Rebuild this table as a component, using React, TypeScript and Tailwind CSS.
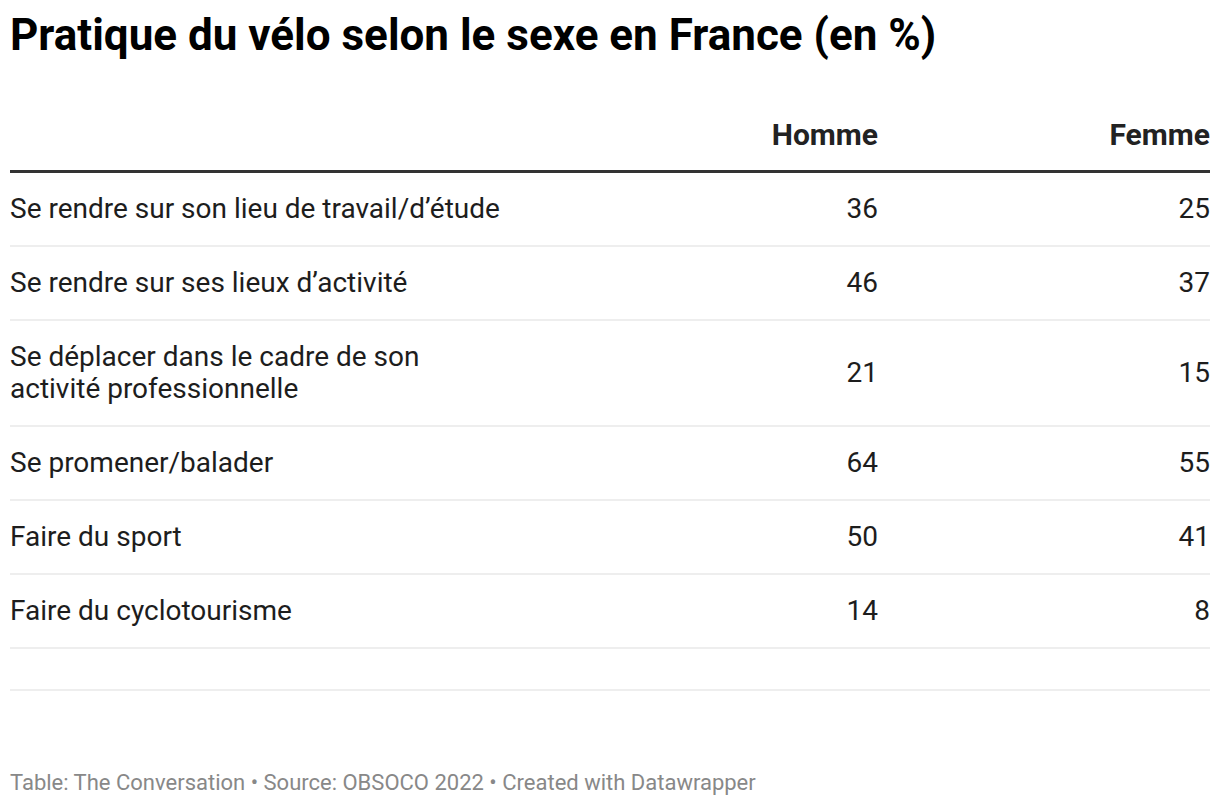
import React from "react";

const rows: { label: React.ReactNode; h: string; f: string }[] = [
  { label: "Se rendre sur son lieu de travail/d’étude", h: "36", f: "25" },
  { label: "Se rendre sur ses lieux d’activité", h: "46", f: "37" },
  {
    label: (
      <>
        Se déplacer dans le cadre de son
        <br />
        activité professionnelle
      </>
    ),
    h: "21",
    f: "15",
  },
  { label: "Se promener/balader", h: "64", f: "55" },
  { label: "Faire du sport", h: "50", f: "41" },
  { label: "Faire du cyclotourisme", h: "14", f: "8" },
];

export default function App() {
  return (
    <div
      className="w-[1220px] h-[806px] bg-white px-[10px] text-[#1d1d1d] overflow-hidden"
      style={{ fontFamily: "Roboto, 'Liberation Sans', sans-serif" }}
    >
      <h1 className="pt-[10px] text-[44px] leading-[50px] font-bold text-black whitespace-nowrap">
        Pratique du vélo selon le sexe en France (en %)
      </h1>
      <div className="mt-[57px] flex items-end border-b-[3px] border-[#333333] pb-[17px] text-[30px] leading-[36px] font-bold text-[#222222]">
        <div className="flex-1" />
        <div className="w-[332px] text-right">Homme</div>
        <div className="w-[332px] text-right">Femme</div>
      </div>
      {rows.map((r, i) => (
        <div
          key={i}
          className="flex items-center border-b-2 border-[#eeeeee] py-[20px] text-[28px] leading-[32px]"
        >
          <div className="flex-1 whitespace-nowrap">{r.label}</div>
          <div className="w-[332px] text-right">{r.h}</div>
          <div className="w-[332px] text-right">{r.f}</div>
        </div>
      ))}
      <div className="h-[42px] border-b-2 border-[#eeeeee]" />
      <div className="mt-[79px] text-[22px] leading-[26px] text-[#888888] whitespace-nowrap">
        Table: The Conversation • Source: OBSOCO 2022 • Created with Datawrapper
      </div>
    </div>
  );
}
